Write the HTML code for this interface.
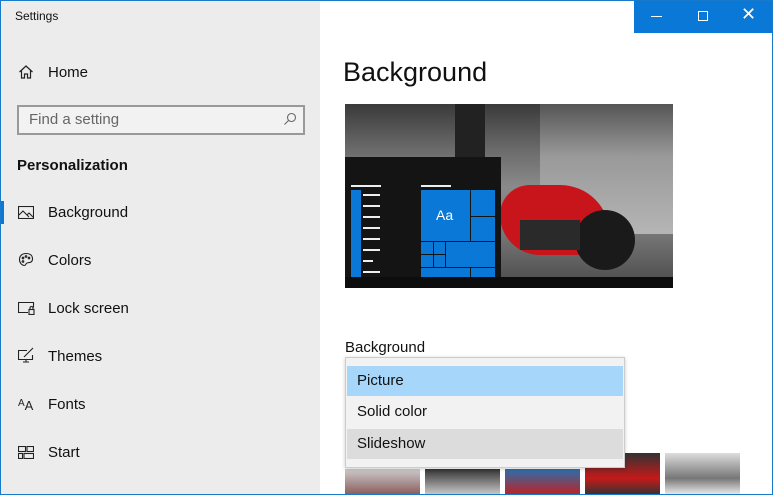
<!DOCTYPE html><html><head><style>
*{margin:0;padding:0;box-sizing:border-box}
html,body{width:773px;height:495px;overflow:hidden}
body{position:relative;font-family:"Liberation Sans",sans-serif;background:#fff}
.a{position:absolute}
#side{left:0;top:0;width:320px;height:495px;background:#ececec}
.nav{position:absolute;left:48px;font-size:15px;color:#111}
.ic{position:absolute;left:18px}
.t{background:#0a78d7;position:absolute}
.w{background:#eee;position:absolute;height:2px}
.dd{font-size:15px;color:#111;position:absolute;left:347px;width:276px;height:30px;line-height:30px;padding-left:10px}
.th{position:absolute;width:75px}
</style></head><body>
<div class="a" id="side"></div>
<div class="a" style="left:15px;top:9px;font-size:12px;color:#111">Settings</div>
<div class="a" style="left:634px;top:0;width:139px;height:33px;background:#0a78d7"></div>
<div class="a" style="left:651px;top:16px;width:11px;height:1px;background:#fff"></div>
<div class="a" style="left:698px;top:11px;width:10px;height:10px;border:1px solid #fff"></div>
<div class="a" style="left:741px;top:4px;color:#fff;font-size:18px;font-weight:300">✕</div>

<svg class="ic" style="top:64px" width="16" height="16" viewBox="0 0 16 16" fill="none" stroke="#222" stroke-width="1.2"><path d="M1.5 8L8 2l6.5 6M3.5 6.5V14h3v-4h3v4h3V6.5"/></svg>
<div class="nav" style="top:64px">Home</div>
<div class="a" style="left:17px;top:105px;width:288px;height:30px;border:2px solid #999;background:#f2f2f2"></div>
<div class="a" style="left:29px;top:111px;font-size:15px;color:#666">Find a setting</div>
<svg class="a" style="left:283px;top:112px" width="14" height="14" viewBox="0 0 14 14" fill="none" stroke="#666" stroke-width="1.1"><circle cx="8.5" cy="5.5" r="4"/><path d="M5.5 8.5L1.5 12.5"/></svg>
<div class="a" style="left:17px;top:157px;font-size:15px;font-weight:bold;color:#111">Personalization</div>
<div class="a" style="left:0;top:201px;width:4px;height:23px;background:#0a78d7"></div>
<svg class="ic" style="top:206px" width="16" height="13" viewBox="0 0 16 13" fill="none" stroke="#222" stroke-width="1.1"><rect x="0.5" y="0.5" width="15" height="12"/><path d="M1 9l4-4 6 6M9 9l2-2 4 4"/></svg>
<div class="nav" style="top:204px">Background</div>
<svg class="ic" style="top:252px" width="16" height="16" viewBox="0 0 16 16" fill="none" stroke="#222" stroke-width="1.1"><path d="M8 1.5C4 1.5 1.5 4 1.5 7.5s2.5 6 5 6c1.5 0 1-2 2.5-2.5S14.5 11 14.5 7 11.5 1.5 8 1.5z"/><circle cx="5" cy="6" r=".8"/><circle cx="8" cy="4.5" r=".8"/><circle cx="11" cy="6" r=".8"/><circle cx="5" cy="9.5" r=".8"/></svg>
<div class="nav" style="top:252px">Colors</div>
<svg class="ic" style="top:302px" width="17" height="13" viewBox="0 0 17 13" fill="none" stroke="#222" stroke-width="1.1"><path d="M10 10.5H.5V.5h15v5"/><rect x="11" y="7.5" width="5" height="5"/><path d="M12 7.5V6a1.5 1.5 0 013 0v1.5"/></svg>
<div class="nav" style="top:300px">Lock screen</div>
<svg class="ic" style="top:347px" width="17" height="16" viewBox="0 0 17 16" fill="none" stroke="#222" stroke-width="1.1"><path d="M9 3.5H.5v9h14V8M5 15h6M8 12.5V15M6 10l9-9"/></svg>
<div class="nav" style="top:348px">Themes</div>
<div class="a" style="left:18px;top:398px;font-size:13px;color:#222"><span style="font-size:10px;vertical-align:4px">A</span>A</div>
<div class="nav" style="top:396px">Fonts</div>
<svg class="ic" style="top:446px" width="16" height="13" viewBox="0 0 16 13" fill="none" stroke="#222" stroke-width="1.1"><rect x=".5" y=".5" width="7" height="5"/><rect x="9" y=".5" width="6.5" height="5"/><rect x=".5" y="7.5" width="4" height="5"/><rect x="6" y="7.5" width="9.5" height="5"/></svg>
<div class="nav" style="top:444px">Start</div>

<div class="a" style="left:343px;top:57px;font-size:27px;color:#111">Background</div>
<div class="a" style="left:345px;top:104px;width:328px;height:184px;background:linear-gradient(180deg,#3a3a3a 0%,#6b6b6b 25%,#8a8a8a 45%,#777 70%,#4a4a4a 100%)"></div>
<div class="a" style="left:540px;top:104px;width:133px;height:130px;background:linear-gradient(180deg,#555,#999 40%,#b5b5b5)"></div>
<div class="a" style="left:455px;top:104px;width:30px;height:60px;background:#222"></div>
<div class="a" style="left:500px;top:185px;width:110px;height:70px;background:#c8151c;border-radius:30px 50px 20px 40px"></div>
<div class="a" style="left:575px;top:210px;width:60px;height:60px;border-radius:50%;background:#1a1a1a"></div>
<div class="a" style="left:520px;top:220px;width:60px;height:30px;background:#2a2a2a"></div>
<div class="a" style="left:345px;top:157px;width:156px;height:131px;background:#141414"></div>
<div class="a" style="left:345px;top:277px;width:328px;height:11px;background:#0d0d0d"></div>
<div class="w" style="left:351px;top:185px;width:30px"></div>
<div class="w" style="left:421px;top:185px;width:30px"></div>
<div class="t" style="left:351px;top:190px;width:10px;height:87px"></div>
<div class="w" style="left:363px;top:194px;width:17px"></div>
<div class="w" style="left:363px;top:205px;width:17px"></div>
<div class="w" style="left:363px;top:216px;width:17px"></div>
<div class="w" style="left:363px;top:227px;width:17px"></div>
<div class="w" style="left:363px;top:238px;width:17px"></div>
<div class="w" style="left:363px;top:249px;width:17px"></div>
<div class="w" style="left:363px;top:260px;width:10px"></div>
<div class="w" style="left:363px;top:271px;width:17px"></div>
<div class="t" style="left:421px;top:190px;width:49px;height:51px"></div>
<div class="a" style="left:436px;top:207px;color:#fff;font-size:14px">Aa</div>
<div class="t" style="left:471px;top:190px;width:24px;height:26px"></div>
<div class="t" style="left:471px;top:217px;width:24px;height:24px"></div>
<div class="t" style="left:421px;top:242px;width:12px;height:12px"></div>
<div class="t" style="left:434px;top:242px;width:11px;height:12px"></div>
<div class="t" style="left:421px;top:255px;width:12px;height:12px"></div>
<div class="t" style="left:434px;top:255px;width:11px;height:12px"></div>
<div class="t" style="left:446px;top:242px;width:49px;height:25px"></div>
<div class="t" style="left:421px;top:268px;width:49px;height:9px"></div>
<div class="t" style="left:471px;top:268px;width:24px;height:9px"></div>

<div class="a" style="left:345px;top:339px;font-size:15px;color:#111">Background</div>
<div class="th" style="left:345px;top:469px;height:26px;background:linear-gradient(#ccc,#8a5a5a)"></div>
<div class="th" style="left:425px;top:469px;height:26px;background:linear-gradient(#333,#ccc)"></div>
<div class="th" style="left:505px;top:469px;height:26px;background:linear-gradient(#2a6fae,#c02020)"></div>
<div class="th" style="left:585px;top:453px;height:42px;background:linear-gradient(#333,#c41a1a 60%,#333)"></div>
<div class="th" style="left:665px;top:453px;height:42px;background:linear-gradient(#ddd,#777 60%,#eee)"></div>
<div class="a" style="left:345px;top:357px;width:280px;height:111px;background:#f2f2f2;border:1px solid #ccc;box-shadow:0 1px 4px rgba(0,0,0,.2)"></div>
<div class="dd" style="top:366px;background:#a6d7fb">Picture</div>
<div class="dd" style="top:397px">Solid color</div>
<div class="dd" style="top:429px;background:#dcdcdc">Slideshow</div>

<div class="a" style="left:0;top:0;width:1px;height:495px;background:#1979ca"></div>
<div class="a" style="left:772px;top:0;width:1px;height:495px;background:#1979ca"></div>
<div class="a" style="left:0;top:494px;width:773px;height:1px;background:#1979ca"></div>
<div class="a" style="left:0;top:0;width:773px;height:1px;background:#1979ca"></div>
</body></html>
